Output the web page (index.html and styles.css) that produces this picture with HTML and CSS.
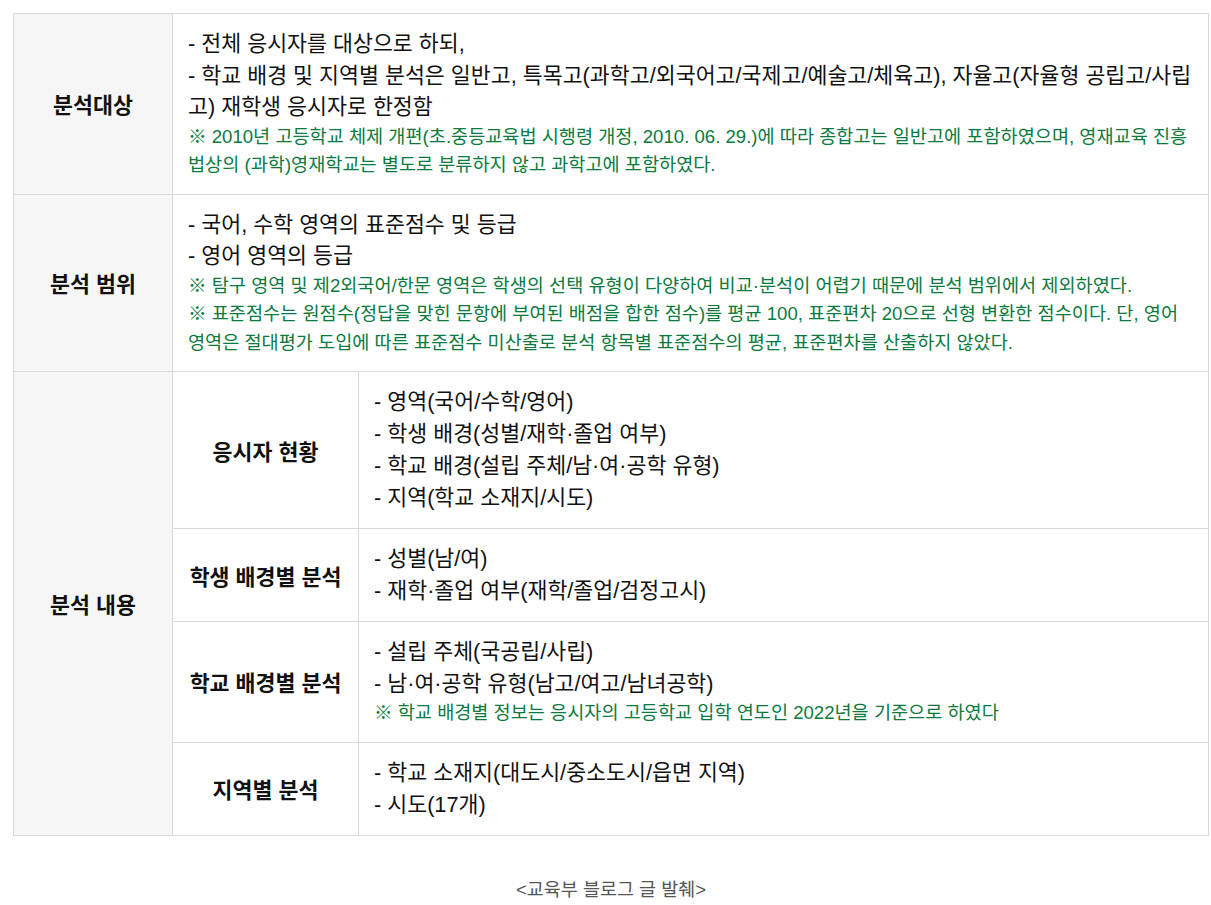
FILE: index.html
```html
<!DOCTYPE html>
<html lang="ko">

<head>
  <meta charset="utf-8">
  <meta name="viewport" content="width=device-width">
  <title>분석 개요</title>
  <link rel="stylesheet" href="styles.css">
</head>

<body>
  <div class="wrap">
    <table class="summary">
      <colgroup>
        <col class="col-head">
        <col class="col-sub">
        <col>
      </colgroup>
      <tr>
        <th>분석대상</th>
        <td colspan="2">
          <p>- 전체 응시자를 대상으로 하되,</p>
          <p>- 학교 배경 및 지역별 분석은 일반고, 특목고(과학고/외국어고/국제고/예술고/체육고), 자율고(자율형 공립고/사립고) 재학생 응시자로 한정함</p>
          <p class="note">※ 2010년 고등학교 체제 개편(초.중등교육법 시행령 개정, 2010. 06. 29.)에 따라 종합고는 일반고에 포함하였으며, 영재교육 진흥법상의 (과학)영재학교는 별도로 분류하지 않고 과학고에 포함하였다.</p>
        </td>
      </tr>
      <tr>
        <th>분석 범위</th>
        <td colspan="2">
          <p>- 국어, 수학 영역의 표준점수 및 등급</p>
          <p>- 영어 영역의 등급</p>
          <p class="note">※ 탐구 영역 및 제2외국어/한문 영역은 학생의 선택 유형이 다양하여 비교·분석이 어렵기 때문에 분석 범위에서 제외하였다.</p>
          <p class="note">※ 표준점수는 원점수(정답을 맞힌 문항에 부여된 배점을 합한 점수)를 평균 100, 표준편차 20으로 선형 변환한 점수이다. 단, 영어 영역은 절대평가 도입에 따른 표준점수 미산출로 분석 항목별 표준점수의 평균, 표준편차를 산출하지 않았다.</p>
        </td>
      </tr>
      <tr class="loose">
        <th rowspan="4">분석 내용</th>
        <td class="sub">응시자 현황</td>
        <td>
          <p>- 영역(국어/수학/영어)</p>
          <p>- 학생 배경(성별/재학·졸업 여부)</p>
          <p>- 학교 배경(설립 주체/남·여·공학 유형)</p>
          <p>- 지역(학교 소재지/시도)</p>
        </td>
      </tr>
      <tr class="loose">
        <td class="sub">학생 배경별 분석</td>
        <td>
          <p>- 성별(남/여)</p>
          <p>- 재학·졸업 여부(재학/졸업/검정고시)</p>
        </td>
      </tr>
      <tr>
        <td class="sub">학교 배경별 분석</td>
        <td>
          <p>- 설립 주체(국공립/사립)</p>
          <p>- 남·여·공학 유형(남고/여고/남녀공학)</p>
          <p class="note">※ 학교 배경별 정보는 응시자의 고등학교 입학 연도인 2022년을 기준으로 하였다</p>
        </td>
      </tr>
      <tr class="loose">
        <td class="sub">지역별 분석</td>
        <td>
          <p>- 학교 소재지(대도시/중소도시/읍면 지역)</p>
          <p>- 시도(17개)</p>
        </td>
      </tr>
    </table>

    <p class="caption">&lt;교육부 블로그 글 발췌&gt;</p>
  </div>
</body>
</html>
```

FILE: styles.css
```css
html {
  background-color: #ffffff;
  color: #111111;
}

body {
  margin: 0;
  padding: 0;
  font-family: "Liberation Sans", "Noto Sans CJK KR", sans-serif;
}

.wrap {
  padding: 13px 0 0 13px;
  width: 1196px;
}

.summary {
  width: 1196px;
  border-collapse: collapse;
  table-layout: fixed;
  font-size: 21.7px;
}

.col-head {
  width: 159px;
}

.col-sub {
  width: 186px;
}

.summary th,
.summary td {
  border: 1px solid #d9d9d9;
  padding: 14px 15px 14px 15px;
  vertical-align: middle;
}

.summary th {
  background-color: #f6f6f6;
  font-weight: bold;
  text-align: center;
  color: #111111;
}

.summary td.sub {
  text-align: center;
  font-weight: bold;
}

.summary p {
  margin: 0;
  line-height: 31.5px;
}

.summary .loose p {
  line-height: 32px;
}

.summary p.note {
  font-size: 18.6px;
  line-height: 28.5px;
  color: #0b7a3e;
}

.caption {
  margin: 39px 0 0 0;
  text-align: center;
  font-size: 18.5px;
  color: #555555;
}
```
